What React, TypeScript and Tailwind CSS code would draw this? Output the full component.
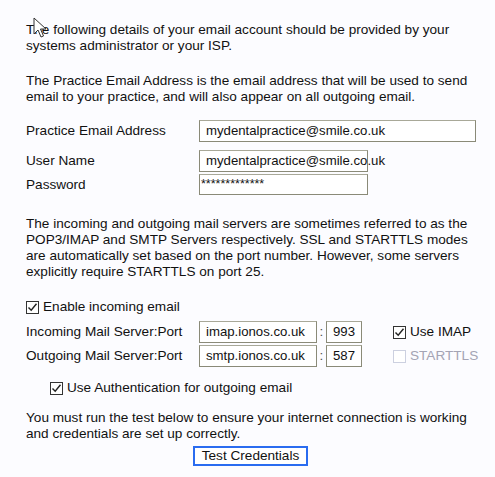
const font = { fontFamily: '"Liberation Sans", Arial, sans-serif' };

function Check({ checked, disabled }: { checked?: boolean; disabled?: boolean }) {
  return (
    <span
      className={`inline-flex h-[13px] w-[13px] shrink-0 items-center justify-center border bg-white ${
        disabled ? 'border-[#ccd0e0]' : 'border-[#333333]'
      }`}
    >
      {checked && (
        <svg width="11" height="11" viewBox="0 0 11 11">
          <path d="M1.5 5.5 L4.2 8.3 L9.5 1.8" fill="none" stroke="#222" strokeWidth="1.4" />
        </svg>
      )}
    </span>
  );
}

function Box({ value, className = '' }: { value: string; className?: string }) {
  return (
    <div
      className={`flex h-[22px] items-center whitespace-nowrap border border-[#8a8a78] border-t-[#a8a898] bg-white px-[6px] text-[13.2px] text-[#111] ${className}`}
    >
      {value}
    </div>
  );
}

export default function App() {
  return (
    <div className="relative h-[477px] w-[495px] overflow-hidden bg-[#fcfcff] pl-[26px] pt-[22px] text-[13.6px] leading-[16px] text-[#111]" style={font}>
      <p>
        The following details of your email account should be provided by your
        <br />
        systems administrator or your ISP.
      </p>
      <p className="mt-[19px]">
        The Practice Email Address is the email address that will be used to send
        <br />
        email to your practice, and will also appear on all outgoing email.
      </p>

      <div className="mt-[15px] flex items-center">
        <span className="w-[173px]">Practice Email Address</span>
        <Box value="mydentalpractice@smile.co.uk" className="w-[277px]" />
      </div>
      <div className="mt-[8px] flex items-center">
        <span className="w-[173px]">User Name</span>
        <Box value="mydentalpractice@smile.co.uk" className="w-[169px] overflow-visible" />
      </div>
      <div className="mt-[2px] flex items-center">
        <span className="w-[173px]">Password</span>
        <div className="flex h-[21px] w-[169px] items-start border border-[#8a8a78] border-t-[#a8a898] bg-white px-[1px] pt-[2px] text-[12.5px] leading-[14px]">
          *************
        </div>
      </div>

      <p className="mt-[21px]">
        The incoming and outgoing mail servers are sometimes referred to as the
        <br />
        POP3/IMAP and SMTP Servers respectively. SSL and STARTTLS modes
        <br />
        are automatically set based on the port number. However, some servers
        <br />
        explicitly require STARTTLS on port 25.
      </p>

      <div className="mt-[19px] flex items-center gap-[4px]">
        <Check checked />
        <span>Enable incoming email</span>
      </div>

      <div className="mt-[6px] flex items-center">
        <span className="w-[173px]">Incoming Mail Server:Port</span>
        <Box value="imap.ionos.co.uk" className="w-[118px] px-[4px]" />
        <span className="w-[9px] text-center text-[#555]">:</span>
        <Box value="993" className="w-[36px] px-[3px]" />
        <span className="ml-[31px] flex items-center gap-[4px]">
          <Check checked />
          <span>Use IMAP</span>
        </span>
      </div>
      <div className="mt-[2px] flex items-center">
        <span className="w-[173px]">Outgoing Mail Server:Port</span>
        <Box value="smtp.ionos.co.uk" className="w-[118px] px-[4px]" />
        <span className="w-[9px] text-center text-[#555]">:</span>
        <Box value="587" className="w-[36px] px-[3px]" />
        <span className="ml-[31px] flex items-center gap-[4px] text-[#a4a4b4]">
          <Check disabled />
          <span>STARTTLS</span>
        </span>
      </div>

      <div className="ml-[24px] mt-[13px] flex items-center gap-[4px]">
        <Check checked />
        <span>Use Authentication for outgoing email</span>
      </div>

      <p className="mt-[14px]">
        You must run the test below to ensure your internet connection is working
        <br />
        and credentials are set up correctly.
      </p>

      <button className="ml-[167px] mt-[4px] flex h-[20px] w-[115px] items-center justify-center border-2 border-[#2a6cf0] bg-white text-[13.6px] text-[#111]">
        Test Credentials
      </button>

      <svg className="absolute left-[33px] top-[17px]" width="14" height="22" viewBox="0 0 14 22">
        <path d="M1 1 L1 17 L5 13 L8 20 L10.5 19 L7.5 12 L13 12 Z" fill="#fff" stroke="#333" strokeWidth="1" strokeLinejoin="round" />
      </svg>
    </div>
  );
}
